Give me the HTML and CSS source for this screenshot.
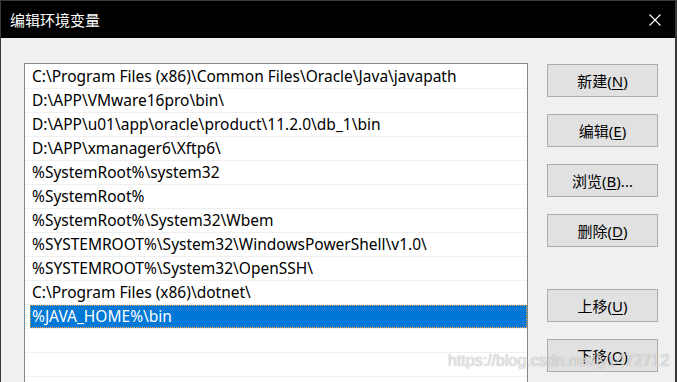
FILE: index.html
```html
<!DOCTYPE html>
<html lang="zh-CN">
<head>
    <meta charset="UTF-8">
    <title>编辑环境变量</title>
    <link rel="stylesheet" href="styles.css">
</head>
<body>
<div class="window">
    <div class="titlebar">
        <span class="title">编辑环境变量</span>
        <svg class="close" width="12" height="12" viewBox="0 0 12 12">
            <path d="M0.5 0.5 L11.5 11.5 M11.5 0.5 L0.5 11.5" stroke="#fff" stroke-width="1.1" fill="none"/>
        </svg>
    </div>
    <div class="content">
        <div class="list">
            <div class="row"><span class="label">C:\Program Files (x86)\Common Files\Oracle\Java\javapath</span></div>
            <div class="row"><span class="label">D:\APP\VMware16pro\bin\</span></div>
            <div class="row"><span class="label">D:\APP\u01\app\oracle\product\11.2.0\db_1\bin</span></div>
            <div class="row"><span class="label">D:\APP\xmanager6\Xftp6\</span></div>
            <div class="row"><span class="label">%SystemRoot%\system32</span></div>
            <div class="row"><span class="label">%SystemRoot%</span></div>
            <div class="row"><span class="label">%SystemRoot%\System32\Wbem</span></div>
            <div class="row"><span class="label">%SYSTEMROOT%\System32\WindowsPowerShell\v1.0\</span></div>
            <div class="row"><span class="label">%SYSTEMROOT%\System32\OpenSSH\</span></div>
            <div class="row"><span class="label">C:\Program Files (x86)\dotnet\</span></div>
            <div class="row selected"><span class="label">%JAVA_HOME%\bin</span></div>
            <div class="row"><span class="label"></span></div>
            <div class="row"><span class="label"></span></div>
            <div class="row"><span class="label"></span></div>
        </div>
        <div class="buttons">
            <button class="btn">新建(<u>N</u>)</button>
            <button class="btn">编辑(<u>E</u>)</button>
            <button class="btn">浏览(<u>B</u>)...</button>
            <button class="btn">删除(<u>D</u>)</button>
            <button class="btn spaced">上移(<u>U</u>)</button>
            <button class="btn">下移(<u>O</u>)</button>
        </div>
    </div>
    <div class="watermark">https://blog.csdn.net/ly1472712</div>
</div>
</body>
</html>
```

FILE: styles.css
```css
body {
    margin: 0;
    background-color: #f0f0f0;
    font-family: "Noto Sans", "Noto Sans CJK SC", sans-serif;
    overflow: hidden;
}
.window {
    position: relative;
    height: 100vh;
    box-sizing: border-box;
    border-top: 1px solid #3a3a3a;
    border-left: 1px solid #3a3a3a;
    border-right: 2px solid #3a3a3a;
    background-color: #f0f0f0;
    overflow: hidden;
}
.titlebar {
    height: 37px;
    background-color: #000;
    color: #fff;
    display: flex;
    align-items: center;
    justify-content: space-between;
    padding: 0 14px 0 9px;
}
.title {
    font-family: "Noto Sans CJK SC", sans-serif;
    font-size: 15px;
}
.close {
    display: block;
}
.content {
    display: flex;
    padding: 25px 17px 0 23px;
}
.list {
    width: 502px;
    height: 400px;
    flex: none;
    border: 1px solid #828790;
    background-color: #fff;
    padding-top: 1px;
    box-sizing: content-box;
}
.row {
    height: 23px;
    border-bottom: 1px solid #efefef;
    display: flex;
}
.label {
    flex: 1;
    padding-left: 7px;
    font-size: 15.5px;
    line-height: 23px;
    color: #000;
    white-space: nowrap;
}
.row.selected .label {
    margin-left: 5px;
    padding-left: 2px;
    background-color: #0078d7;
    color: #fff;
    outline: 1px dotted #f7a54a;
    outline-offset: -1px;
}
.buttons {
    display: flex;
    flex-direction: column;
    gap: 17px;
    margin-left: 19px;
    padding-top: 1px;
}
.btn {
    width: 111px;
    height: 33px;
    border: 1px solid #adadad;
    background-color: #e1e1e1;
    font-family: "Noto Sans", "Noto Sans CJK SC", sans-serif;
    font-size: 15px;
    color: #000;
    padding: 0;
}
.btn u {
    text-underline-offset: 2px;
}
.spaced {
    margin-top: 25px;
}
.watermark {
    position: absolute;
    left: 447px;
    top: 351px;
    font-family: "Liberation Sans", sans-serif;
    font-size: 16px;
    color: rgba(255, 255, 255, 0.75);
    text-shadow: 0 0 1px rgba(0, 0, 0, 0.45);
}
```
